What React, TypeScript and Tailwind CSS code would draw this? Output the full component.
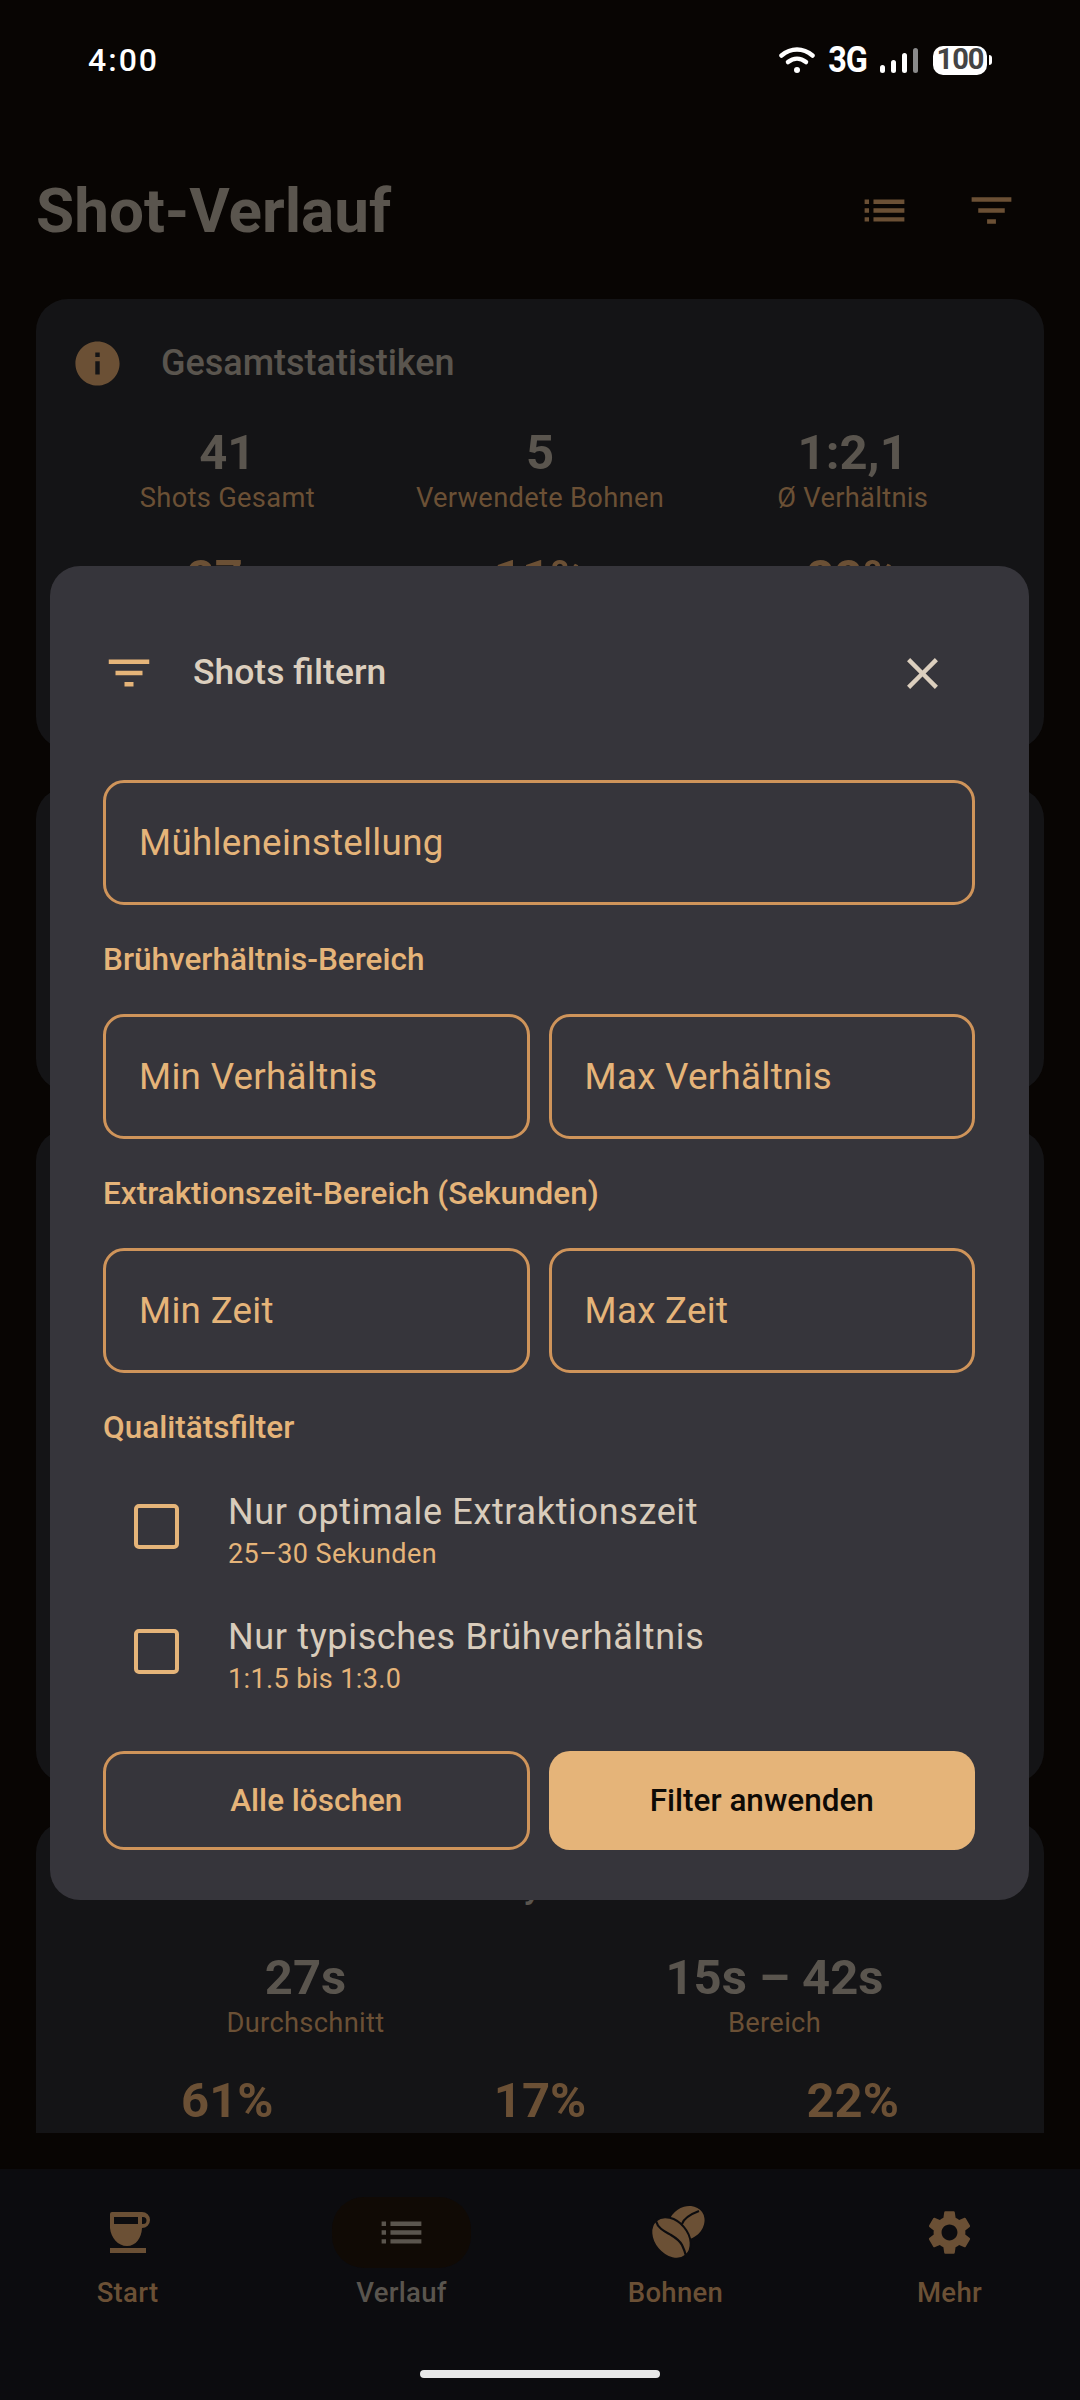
import type { ReactNode } from 'react';

const FILTER_PATH = 'M10 18h4v-2h-4v2zM3 6v2h18V6H3zm3 7h12v-2H6v2z';
const LIST_PATH = 'M3 13h2v-2H3v2zm0 4h2v-2H3v2zm0-8h2V7H3v2zm4 4h14v-2H7v2zm0 4h14v-2H7v2zM7 7v2h14V7H7z';
const INFO_PATH = 'M12 2C6.48 2 2 6.48 2 12s4.48 10 10 10 10-4.48 10-10S17.52 2 12 2zm1 15h-2v-6h2v6zm0-8h-2V7h2v2z';
const CLOSE_PATH = 'M19 6.41 17.59 5 12 10.59 6.41 5 5 6.41 10.59 12 5 17.59 6.41 19 12 13.41 17.59 19 19 17.59 13.41 12z';
const GEAR_PATH =
  'M19.14 12.94c.04-.3.06-.61.06-.94 0-.32-.02-.64-.07-.94l2.03-1.58c.18-.14.23-.41.12-.61l-1.92-3.32c-.12-.22-.37-.29-.59-.22l-2.39.96c-.5-.38-1.03-.7-1.62-.94l-.36-2.54c-.04-.24-.24-.41-.48-.41h-3.84c-.24 0-.43.17-.47.41l-.36 2.54c-.59.24-1.13.57-1.62.94l-2.39-.96c-.22-.08-.47 0-.59.22L2.74 8.87c-.12.21-.08.47.12.61l2.03 1.58c-.05.3-.09.63-.09.94s.02.64.07.94l-2.03 1.58c-.18.14-.23.41-.12.61l1.92 3.32c.12.22.37.29.59.22l2.39-.96c.5.38 1.03.7 1.62.94l.36 2.54c.05.24.24.41.48.41h3.84c.24 0 .44-.17.47-.41l.36-2.54c.59-.24 1.13-.56 1.62-.94l2.39.96c.22.08.47 0 .59-.22l1.92-3.32c.12-.22.07-.47-.12-.61l-2.01-1.58zM12 15.6c-1.98 0-3.6-1.62-3.6-3.6s1.62-3.6 3.6-3.6 3.6 1.62 3.6 3.6-1.62 3.6-3.6 3.6z';

function Icon({ d, className }: { d: string; className: string }) {
  return (
    <svg viewBox="0 0 24 24" fill="currentColor" className={className}>
      <path d={d} />
    </svg>
  );
}

function Stat({ value, label, tone = 'text-[#5a554e]' }: { value: string; label?: string; tone?: string }) {
  return (
    <div className="flex flex-1 flex-col items-center">
      <span className={`text-[49px] leading-[56px] font-bold ${tone}`}>{value}</span>
      {label && <span className="text-[27.300px] leading-[34px] tracking-[0.3px] text-[#6b5035]">{label}</span>}
    </div>
  );
}

function Card({ title, icon = true, height, children }: { title?: string; icon?: boolean; height: string; children?: ReactNode }) {
  return (
    <section className={`${height} shrink-0 overflow-hidden rounded-[32px] bg-[#141416] px-[35px] pt-[42px]`}>
      {title && (
        <div className="flex h-[44px] items-center gap-[37px]">
          {icon ? <Icon d={INFO_PATH} className="h-[53px] w-[53px] shrink-0 text-[#6b5035]" /> : <div className="w-[53px] shrink-0" />}
          <h2 className="text-[36px] font-medium whitespace-nowrap text-[#5a554e]">{title}</h2>
        </div>
      )}
      {children}
    </section>
  );
}

function Field({ label, wide }: { label: string; wide?: boolean }) {
  return (
    <div className={`flex h-[125px] items-center rounded-[21px] border-[3px] border-[#cf945a] pl-[33px] ${wide ? 'w-full' : 'flex-1'}`}>
      <span className="text-[36.750px] tracking-[0.3px] text-[#e5b479]">{label}</span>
    </div>
  );
}

function GroupLabel({ children }: { children: ReactNode }) {
  return <div className="flex h-[109px] items-center text-[31.500px] font-medium text-[#e5b479]">{children}</div>;
}

function CheckRow({ title, hint }: { title: string; hint: string }) {
  return (
    <div className="flex h-[125px] items-center">
      <div className="mb-[6px] ml-[31px] h-[45px] w-[45px] shrink-0 rounded-[5px] border-[4px] border-[#e5b479]" />
      <div className="ml-[49px] flex flex-col">
        <span className="text-[36px] leading-[48px] tracking-[0.65px] text-[#d9ccbb]">{title}</span>
        <span className="text-[27px] leading-[36px] tracking-[0.4px] text-[#e5b479]">{hint}</span>
      </div>
    </div>
  );
}

function CupIcon() {
  return (
    <svg viewBox="0 0 41 41" className="ml-[6px] h-[41px] w-[41px]" fill="#6b5035">
      <path d="M0 2a2 2 0 0 1 2-2h30a8 8 0 0 1 0 16c-.5 10-6 18-15 18S1 26 0 16z" />
      <rect x="0" y="36" width="36" height="5" />
      <rect x="4" y="5" width="24" height="7" fill="#0c0c0f" />
      <path d="M32 5h1a3.500 3.500 0 0 1 0 7h-1z" fill="#0c0c0f" />
    </svg>
  );
}

function BeanIcon() {
  return (
    <svg viewBox="0 0 70 64" className="h-[64px] w-[70px]" fill="none">
      <ellipse cx="45.500" cy="22" rx="19" ry="16" transform="rotate(-35 45.500 22)" fill="#6b5035" />
      <path d="M41 23c2-6 9-10 17-13" stroke="#0c0c0f" strokeWidth="2.200" />
      <ellipse cx="30" cy="37" rx="23" ry="17" transform="rotate(50 30 37)" fill="#6b5035" stroke="#0c0c0f" strokeWidth="2" />
      <path d="M15 20c2 8 10 11 15 14s9 6 11 10 3 7 4 11" stroke="#0c0c0f" strokeWidth="2.200" />
    </svg>
  );
}

function NavItem({ label, icon, active }: { label: string; icon: ReactNode; active?: boolean }) {
  return (
    <div className="flex w-[274px] shrink-0 flex-col items-center">
      <div className={`flex h-[71px] w-[139px] items-center justify-center rounded-[32px] ${active ? 'bg-[#100a05]' : ''}`}>{icon}</div>
      <span className={`mt-[8px] text-[27.500px] leading-[34px] font-medium tracking-[0.3px] ${active ? 'text-[#5a554e]' : 'text-[#6b5035]'}`}>{label}</span>
    </div>
  );
}

function StatusBar() {
  const bars = ['h-[8px] bg-white', 'h-[13px] bg-white', 'h-[20px] bg-white', 'h-[25px] bg-[#8a8a8a]'];
  return (
    <div className="flex h-[120px] shrink-0 items-center justify-between px-[88px]">
      <span className="text-[32px] font-medium tracking-[2px] text-white">4:00</span>
      <div className="flex items-center">
        <svg viewBox="0 0 36 26" className="h-[26px] w-[36px]" fill="none" stroke="#fff" strokeLinecap="round">
          <path d="M2.500 8.500c9.500-8 21.500-8 31 0" strokeWidth="4.500" />
          <path d="M9 15c5.500-4.500 12.500-4.500 18 0" strokeWidth="4.500" />
          <circle cx="18" cy="23" r="3" fill="#fff" stroke="none" />
        </svg>
        <div className="ml-[14px] flex w-[38px] justify-center">
          <span className="scale-x-[0.9] text-[36px] leading-none font-bold tracking-[-1px] whitespace-nowrap text-white">3G</span>
        </div>
        <div className="ml-[13px] flex h-[25px] items-end gap-[6px]">
          {bars.map(bar => (
            <div key={bar} className={`w-[5px] rounded-full ${bar}`} />
          ))}
        </div>
        <div className="ml-[15px] flex h-[29px] w-[54px] items-center justify-center rounded-[10px] bg-white text-[29px] font-bold tracking-[-1px] text-[#444]">100</div>
        <div className="ml-[2px] h-[10px] w-[3px] rounded-r-full bg-white" />
      </div>
    </div>
  );
}

export default function App() {
  return (
    <div className="relative flex h-[2400px] w-[1080px] flex-col overflow-hidden bg-[#080503] font-['Roboto',sans-serif]">
      <StatusBar />

      {/* Header */}
      <header className="flex h-[179px] shrink-0 items-center justify-between pt-[2px] pr-[62px] pl-[36px]">
        <h1 className="text-[62px] font-bold text-[#5a554e]">Shot-Verlauf</h1>
        <div className="flex items-center gap-[54px] text-[#6b5035]">
          <Icon d={LIST_PATH} className="h-[53px] w-[53px]" />
          <Icon d={FILTER_PATH} className="h-[53px] w-[53px]" />
        </div>
      </header>

      {/* Scrolling list, dimmed behind the dialog */}
      <main className="flex h-[1834px] shrink-0 flex-col gap-[38px] overflow-hidden px-[36px]">
        <Card title="Gesamtstatistiken" height="h-[450px]">
          <div className="mt-[40px] flex">
            <Stat value="41" label="Shots Gesamt" />
            <Stat value="5" label="Verwendete Bohnen" />
            <Stat value="1:2,1" label="Ø Verhältnis" />
          </div>
          <div className="mt-[35px] flex">
            <Stat value="27s" tone="text-[#6b5035]" />
            <Stat value="11%" tone="text-[#6b5035]" />
            <Stat value="22%" tone="text-[#6b5035]" />
          </div>
        </Card>
        <Card height="h-[304px]" />
        <Card height="h-[654px]" />
        <Card title="Extraktionszeiten-Analyse" icon={false} height="h-[400px]">
          <div className="mt-[43px] flex">
            <Stat value="27s" label="Durchschnitt" />
            <Stat value="15s – 42s" label="Bereich" />
          </div>
          <div className="mt-[33px] flex">
            <Stat value="61%" tone="text-[#6b5035]" />
            <Stat value="17%" tone="text-[#6b5035]" />
            <Stat value="22%" tone="text-[#6b5035]" />
          </div>
        </Card>
      </main>

      {/* Bottom navigation */}
      <nav className="absolute inset-x-0 bottom-0 flex h-[231px] justify-center bg-[#0c0c0f] pt-[28px] pr-[3px]">
        <NavItem label="Start" icon={<CupIcon />} />
        <NavItem label="Verlauf" icon={<Icon d={LIST_PATH} className="h-[53px] w-[53px] text-[#5a554e]" />} active />
        <NavItem label="Bohnen" icon={<BeanIcon />} />
        <NavItem label="Mehr" icon={<Icon d={GEAR_PATH} className="h-[53px] w-[53px] text-[#6b5035]" />} />
        <div className="absolute bottom-[22px] left-[420px] h-[8px] w-[240px] rounded-full bg-[#e8e8e8]" />
      </nav>

      {/* Filter dialog */}
      <div className="absolute top-[566px] left-[50px] flex h-[1334px] w-[979px] flex-col rounded-[30px] bg-[#36353b] pr-[54px] pl-[53px]">
        <div className="flex h-[214px] shrink-0 items-center">
          <Icon d={FILTER_PATH} className="ml-[-1px] h-[54px] w-[54px] shrink-0 text-[#e5b479]" />
          <span className="ml-[37px] flex-1 text-[35.500px] font-medium text-[#dccfbe]">Shots filtern</span>
          <Icon d={CLOSE_PATH} className="mr-[26px] h-[53px] w-[53px] text-[#dccfbe]" />
        </div>
        <Field label="Mühleneinstellung" wide />
        <GroupLabel>Brühverhältnis-Bereich</GroupLabel>
        <div className="flex gap-[19px]">
          <Field label="Min Verhältnis" />
          <Field label="Max Verhältnis" />
        </div>
        <GroupLabel>Extraktionszeit-Bereich (Sekunden)</GroupLabel>
        <div className="flex gap-[19px]">
          <Field label="Min Zeit" />
          <Field label="Max Zeit" />
        </div>
        <GroupLabel>Qualitätsfilter</GroupLabel>
        <div className="-mt-[15px]">
          <CheckRow title="Nur optimale Extraktionszeit" hint="25–30 Sekunden" />
          <CheckRow title="Nur typisches Brühverhältnis" hint="1:1.5 bis 1:3.0" />
        </div>
        <div className="mt-[34px] grid grid-cols-2 gap-[19px]">
          <button className="h-[99px] rounded-[21px] border-[3px] border-[#cf945a] text-[31.500px] font-medium text-[#e5b479]">Alle löschen</button>
          <button className="h-[99px] rounded-[21px] bg-[#e5b479] text-[31.500px] font-medium text-[#0e0a06]">Filter anwenden</button>
        </div>
      </div>
    </div>
  );
}
